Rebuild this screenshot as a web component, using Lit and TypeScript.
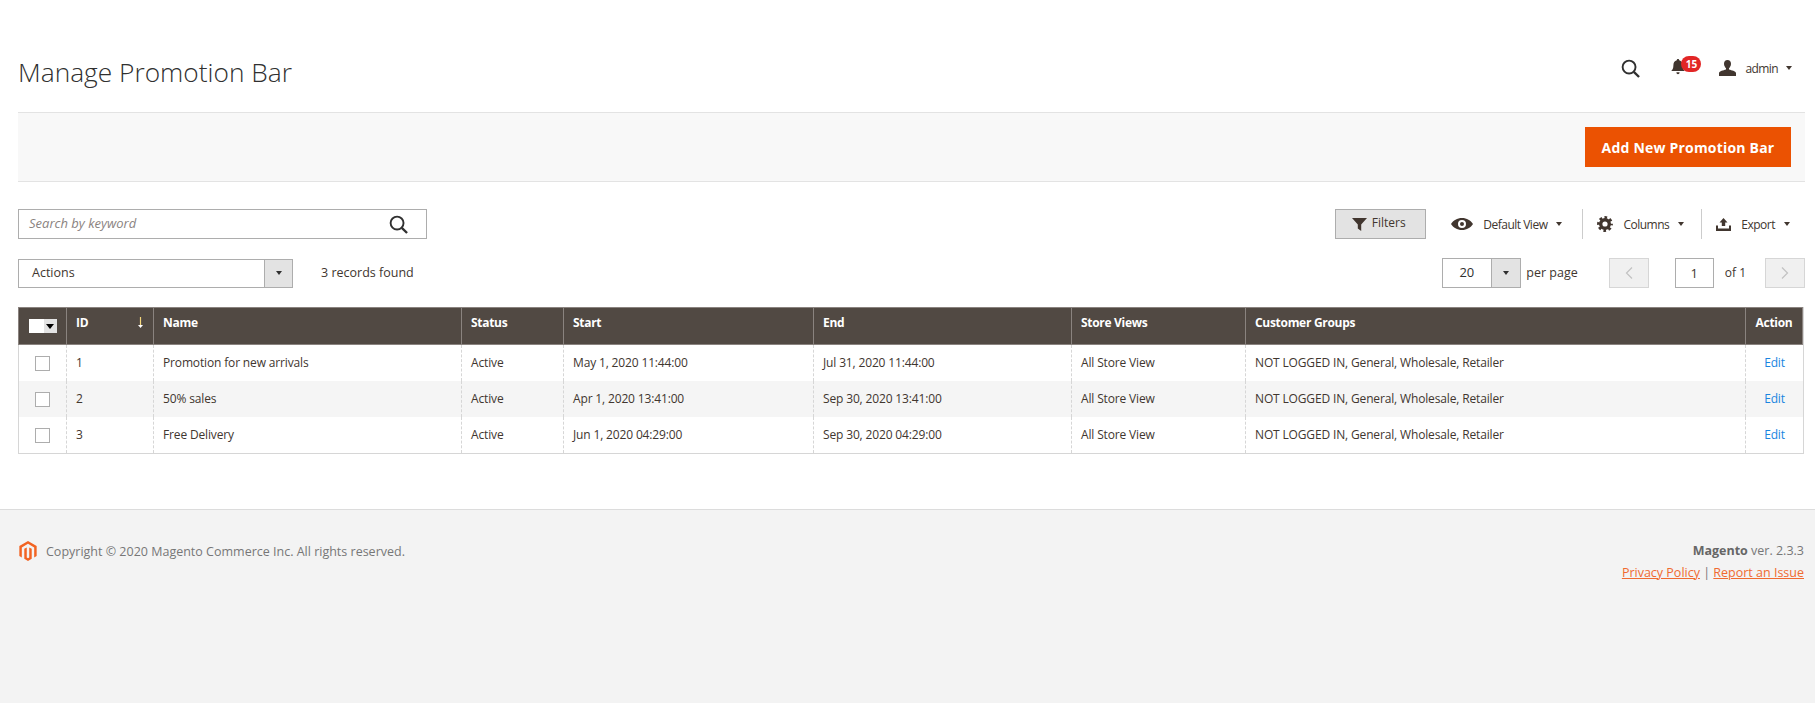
import { LitElement, html, css } from 'lit';
import { customElement } from 'lit/decorators.js';

const LOGO = 'M12 24l-4.455-2.572v-12l2.97-1.715v12.001L12 20.57l1.485-.856V7.713l2.971 1.715v12L12 24zM22.391 6v12l-2.969 1.714V7.713L12 3.43 4.574 7.713v12.001L1.609 18V6L12 0l10.391 6z';

const searchIcon = (size: number) => html`<svg width=${size} height=${size} viewBox="0 0 20 20" fill="none" stroke="#303030" stroke-width="2">
  <circle cx="8.5" cy="8.5" r="6.8"></circle><path d="M13.5 13.5L19 19" stroke-width="2.4"></path></svg>`;

const rows = [
  { id: 1, name: 'Promotion for new arrivals', start: 'May 1, 2020 11:44:00', end: 'Jul 31, 2020 11:44:00' },
  { id: 2, name: '50% sales', start: 'Apr 1, 2020 13:41:00', end: 'Sep 30, 2020 13:41:00' },
  { id: 3, name: 'Free Delivery', start: 'Jun 1, 2020 04:29:00', end: 'Sep 30, 2020 04:29:00' },
];

@customElement('app-root')
export class AppRoot extends LitElement {
  static styles = css`
    :host {
      display: flex;
      flex-direction: column;
      min-height: 100vh;
      background: #fff;
      color: #303030;
      font: 400 12px 'Open Sans', sans-serif;
    }
    svg { display: block; flex: none; }
    .main { padding: 0 10px 0 18px; flex: none; height: 509px; box-sizing: border-box; }

    .page-head { height: 112px; display: flex; justify-content: space-between; box-sizing: border-box; }
    h1 { margin: 0; padding-top: 52px; font-size: 26.3px; line-height: 40px; font-weight: 300; color: #303030; }
    .head-actions { display: flex; align-items: center; height: 30px; margin-top: 53px; padding-right: 13px; }
    .bell { position: relative; margin-left: 31px; width: 30px; height: 18px; }
    .badge {
      position: absolute; left: 10px; top: -3px; width: 20px; height: 16px; border-radius: 8px;
      background: #e22626; color: #fff; font-size: 10px; font-weight: 700; line-height: 16px; text-align: center;
    }
    .user { margin-left: 18px; margin-right: 9px; }
    .admin { color: #41362f; margin-right: 8px; letter-spacing: -.6px; }

    .caret { width: 0; height: 0; border: 3.5px solid transparent; border-top: 4.5px solid #41362f; border-bottom: 0; flex: none; }

    .page-bar {
      display: flex; justify-content: flex-end; height: 70px; box-sizing: border-box;
      padding: 14px 14px 0 0; background: #f8f8f8;
      border-top: 1px solid #e3e3e3; border-bottom: 1px solid #e3e3e3;
    }
    .primary {
      width: 206px; height: 40px; border: 0; background: #eb5202; color: #fff; padding: 0;
      font: 700 14px 'Open Sans', sans-serif; letter-spacing: .2px;
    }

    .row { display: flex; align-items: center; height: 30px; }
    .row-1 { margin-top: 27px; }
    .row-2 { margin-top: 19px; }
    .spacer { flex: 1; }

    .search {
      width: 409px; height: 30px; box-sizing: border-box; border: 1px solid #adadad;
      display: flex; align-items: center; justify-content: space-between; padding: 0 18px 0 10px;
    }
    .search em { color: #8a837f; font-size: 13px; padding-bottom: 2px; }

    .filters {
      width: 91px; height: 30px; box-sizing: border-box; background: #e3e3e3; border: 1px solid #adadad;
      display: flex; align-items: center; justify-content: center; gap: 5px; color: #41362f; margin-right: 25px;
      padding-right: 4px;
    }
    .filters span { padding-bottom: 3px; }
    .menu { display: flex; align-items: center; height: 30px; color: #41362f; letter-spacing: -.5px; }
    .menu + .menu { border-left: 1px solid #ccc; margin-left: 17px; padding-left: 14px; }
    .menu.cols { margin-left: 20px; }
    .menu span { margin: 0 9px 0 10px; }
    .row-end { padding-right: 15px; }

    .select {
      display: flex; height: 29px; box-sizing: border-box; border: 1px solid #adadad; align-items: stretch;
    }
    .select .val { flex: 1; display: flex; align-items: center; padding-bottom: 2px; font-size: 12.5px; }
    .select .arrow { background: #e3e3e3; border-left: 1px solid #adadad; display: flex; align-items: center; justify-content: center; }
    .select .arrow .caret { border-top-color: #303030; }
    .actions { width: 275px; }
    .actions .arrow { width: 27px; }
    .actions .val { padding-left: 13px; color: #41362f; }
    .found { margin-left: 28px; color: #41362f; font-size: 12.5px; padding-bottom: 2px; }

    .per { width: 79px; height: 30px; margin-right: 5px; }
    .per .val { justify-content: center; font-size: 13px; padding-right: 1px; }
    .per .arrow { width: 28px; }
    .per-text { font-size: 12.5px; color: #41362f; margin-right: 31px; padding-bottom: 2px; }
    .pg {
      width: 40px; height: 30px; box-sizing: border-box; background: #f0f0f0; border: 1px solid #d6d6d6;
      display: flex; align-items: center; justify-content: center;
    }
    .cur {
      width: 39px; height: 30px; box-sizing: border-box; border: 1px solid #adadad; margin-left: 26px;
      display: flex; align-items: center; justify-content: center; font-size: 13px; color: #41362f;
    }
    .of { margin: 0 19px 0 11px; font-size: 12px; color: #41362f; padding-bottom: 2px; }

    table {
      margin-top: 19px; width: 1786px; table-layout: fixed; border-collapse: separate; border-spacing: 0;
      border-right: 1px solid #d6d6d6; border-bottom: 1px solid #d6d6d6; box-sizing: border-box;
    }
    th {
      height: 38px; box-sizing: border-box; background: #514943; color: #fff; font-size: 12px; font-weight: 700;
      text-align: left; padding: 0 9px 7px; border-left: 1px solid #8a837f; letter-spacing: -.3px;
      border-top: 1px solid #8a837f; border-bottom: 1px solid #8a837f;
    }
    th:last-child { border-right: 1px solid #8a837f; }
    td { height: 36px; box-sizing: border-box; padding: 0 9px 2px; border-left: 1px dashed #d6d6d6; color: #41362f; letter-spacing: -.15px; }
    td:first-child { border-left: 1px solid #d6d6d6; }
    tr.alt td { background: #f5f5f5; }
    th:nth-child(1) { width: 48px; padding: 0; }
    th:nth-child(2) { width: 87px; }
    th:nth-child(3) { width: 308px; }
    th:nth-child(4) { width: 102px; }
    th:nth-child(5) { width: 250px; }
    th:nth-child(6) { width: 258px; }
    th:nth-child(7) { width: 174px; }
    th:nth-child(8) { width: 500px; }
    th.center, td.center { text-align: center; padding-left: 0; padding-right: 0; }
    td.sel { padding: 0; }
    .id-head { display: flex; justify-content: space-between; align-items: center; padding-right: 1px; }
    .all { display: flex; width: 28px; height: 14px; margin: 0 auto; }
    .all > i { flex: 1; background: #fff; }
    .all b { width: 13px; background: #e3e3e3; display: flex; align-items: center; justify-content: center; }
    .all .caret { border-top-color: #000; border-width: 4px; border-top-width: 5px; border-bottom: 0; }
    .check { display: block; margin: 0 auto; width: 15px; height: 15px; box-sizing: border-box; border: 1px solid #adadad; background: #fff; }
    .edit { color: #1a85e0; }

    footer { flex: 1; background: #f3f3f3; border-top: 1px solid #dcdcdc; padding: 31px 11px 0 19px; display: flex; justify-content: space-between; color: #777; }
    .copy { display: flex; align-items: center; gap: 9px; height: 20px; font-size: 12.5px; color: #777; }
    .legal { text-align: right; font-size: 12.5px; line-height: 21.5px; margin-top: -1px; }
    .legal b { font-weight: 700; color: #666; }
    .legal a { color: #f06a30; text-decoration: underline; }
  `;

  render() {
    return html`
      <div class="main">
        <div class="page-head">
          <h1>Manage Promotion Bar</h1>
          <div class="head-actions">
            ${searchIcon(19)}
            <div class="bell">
              <svg width="14" height="16" viewBox="0 0 14 16" fill="#41362f"><path d="M7 0c.7 0 1.2.5 1.2 1.2C10.6 1.800 11.600 3.800 11.600 6.200c0 3 .8 4.300 2.200 5.800H.2C1.600 10.500 2.400 9.200 2.400 6.200c0-2.400 1-4.400 3.400-5C5.800.5 6.300 0 7 0zM5.400 13.200h3.200C8.600 14.300 7.900 15.200 7 15.200s-1.600-.9-1.600-2z"></path></svg>
              <span class="badge">15</span>
            </div>
            <svg class="user" width="17" height="16" viewBox="0 0 17 16" fill="#41362f"><path d="M8.500 0C10.700 0 12 1.700 12 3.800c0 1.900-1 3.600-2 4.400v1.400c2.800.9 6.500 1.500 7 3.400V16H0v-3c.5-1.900 4.200-2.500 7-3.400V8.200C6 7.400 5 5.700 5 3.800 5 1.700 6.300 0 8.500 0z"></path></svg>
            <span class="admin">admin</span>
            <i class="caret"></i>
          </div>
        </div>

        <div class="page-bar"><button class="primary">Add New Promotion Bar</button></div>

        <div class="row row-1">
          <div class="search"><em>Search by keyword</em>${searchIcon(19)}</div>
          <div class="spacer"></div>
          <div class="filters">
            <svg width="15" height="13" viewBox="0 0 15 13" fill="#41362f"><path d="M0 0h15L9.200 6.500V13L5.800 10.500v-4z"></path></svg>
            <span>Filters</span>
          </div>
          <div class="menu">
            <svg width="22" height="12" viewBox="0 0 22 12" fill="#41362f"><path fill-rule="evenodd" d="M11 0c4.800 0 8.800 2.500 11 6-2.200 3.500-6.200 6-11 6S2.200 9.500 0 6c2.200-3.500 6.200-6 11-6zm0 2a4 4 0 1 0 0 8 4 4 0 0 0 0-8zm0 2a2 2 0 1 1 0 4 2 2 0 0 1 0-4z"></path></svg>
            <span>Default View</span><i class="caret"></i>
          </div>
          <div class="menu cols">
            <svg width="16" height="16" viewBox="0 0 16 16" fill="none" stroke="#41362f">
              <circle cx="8" cy="8" r="4.300" stroke-width="3.400"></circle>
              <circle cx="8" cy="8" r="6.400" stroke-width="3" stroke-dasharray="2.600 2.430" stroke-dashoffset="1.300"></circle>
            </svg>
            <span>Columns</span><i class="caret"></i>
          </div>
          <div class="menu row-end">
            <svg width="15" height="13" viewBox="0 0 15 13" fill="#41362f"><path d="M7.500 0l4 4.500H9.200V8H5.800V4.500H3.500zM0 7.500h2v3h11v-3h2V13H0z"></path></svg>
            <span>Export</span><i class="caret"></i>
          </div>
        </div>

        <div class="row row-2">
          <div class="select actions"><div class="val">Actions</div><div class="arrow"><i class="caret"></i></div></div>
          <div class="found">3 records found</div>
          <div class="spacer"></div>
          <div class="select per"><div class="val">20</div><div class="arrow"><i class="caret"></i></div></div>
          <div class="per-text">per page</div>
          <div class="pg"><svg width="8" height="12" viewBox="0 0 8 12" fill="none" stroke="#c2c2c2" stroke-width="1.200"><path d="M7 .5L1.500 6 7 11.500"></path></svg></div>
          <div class="cur">1</div>
          <div class="of">of 1</div>
          <div class="pg"><svg width="8" height="12" viewBox="0 0 8 12" fill="none" stroke="#c2c2c2" stroke-width="1.200"><path d="M1 .5L6.500 6 1 11.500"></path></svg></div>
        </div>

        <table>
          <thead>
            <tr>
              <th><div class="all"><i></i><b><i class="caret"></i></b></div></th>
              <th>
                <div class="id-head">ID
                  <svg width="5" height="11" viewBox="0 0 5 11" fill="none"><path d="M2.500 0v9" stroke="#f5d77a" stroke-width="1.200"></path><path d="M0 8h5l-2.500 3z" fill="#fff"></path></svg>
                </div>
              </th>
              <th>Name</th><th>Status</th><th>Start</th><th>End</th><th>Store Views</th><th>Customer Groups</th>
              <th class="center">Action</th>
            </tr>
          </thead>
          <tbody>
            ${rows.map((r, i) => html`
              <tr class=${i % 2 ? 'alt' : ''}>
                <td class="sel"><i class="check"></i></td>
                <td>${r.id}</td>
                <td>${r.name}</td>
                <td>Active</td>
                <td>${r.start}</td>
                <td>${r.end}</td>
                <td>All Store View</td>
                <td>NOT LOGGED IN, General, Wholesale, Retailer</td>
                <td class="center"><a class="edit">Edit</a></td>
              </tr>`)}
          </tbody>
        </table>
      </div>

      <footer>
        <div class="copy">
          <svg width="18" height="20" viewBox="1.600 0 20.800 24" fill="#f26322"><path d=${LOGO}></path></svg>
          Copyright © 2020 Magento Commerce Inc. All rights reserved.
        </div>
        <div class="legal">
          <div><b>Magento</b> ver. 2.3.3</div>
          <div><a>Privacy Policy</a> | <a>Report an Issue</a></div>
        </div>
      </footer>
    `;
  }
}
